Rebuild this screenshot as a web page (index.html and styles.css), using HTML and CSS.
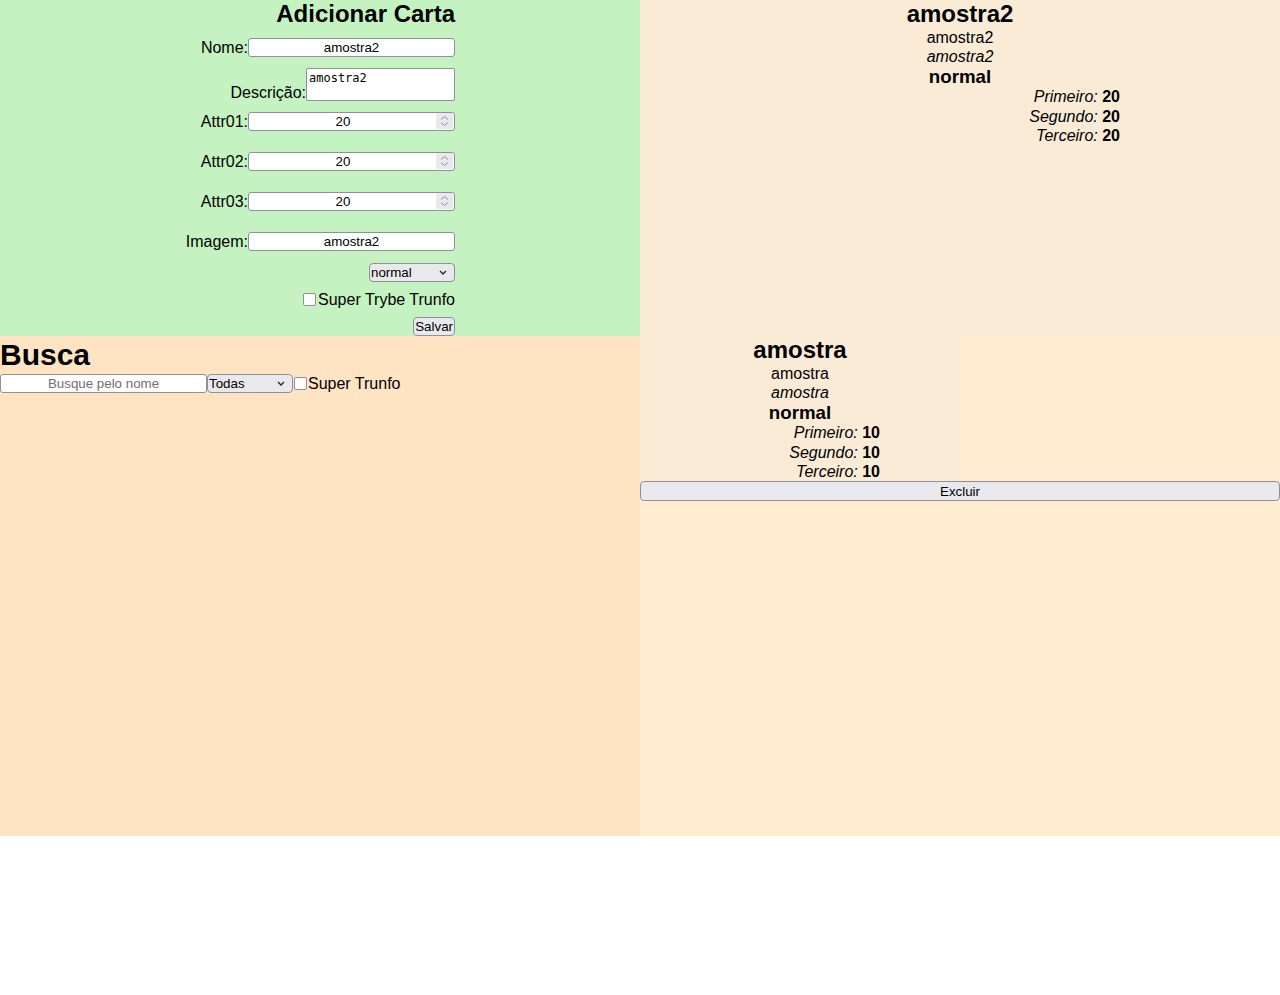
FILE: index.html
```html
<!DOCTYPE html>
<html lang="pt-BR">
<head>
<meta charset="utf-8">
<title>Tryunfo</title>
<link rel="stylesheet" href="styles.css">
</head>
<body>
<div class="app">
  <section class="creator">
    <form class="form">
      <h2 class="form-title">Adicionar Carta</h2>
      <label class="row">Nome:<input class="field" type="text" value="amostra2"></label>
      <label class="row row-end">Descrição:<textarea class="area">amostra2</textarea></label>
      <label class="row row-num">Attr01:<span class="num"><input class="field num-field" type="number" value="20"><span class="spin"><svg width="17" height="16" viewBox="0 0 17 16"><path d="M5 6.5 L8.5 3.5 L12 6.5" fill="none" stroke="#8f8f9d" stroke-width="1"/><path d="M5 9.5 L8.5 12.5 L12 9.5" fill="none" stroke="#8f8f9d" stroke-width="1"/></svg></span></span></label>
      <label class="row row-num">Attr02:<span class="num"><input class="field num-field" type="number" value="20"><span class="spin"><svg width="17" height="16" viewBox="0 0 17 16"><path d="M5 6.5 L8.5 3.5 L12 6.5" fill="none" stroke="#8f8f9d" stroke-width="1"/><path d="M5 9.5 L8.5 12.5 L12 9.5" fill="none" stroke="#8f8f9d" stroke-width="1"/></svg></span></span></label>
      <label class="row row-num">Attr03:<span class="num"><input class="field num-field" type="number" value="20"><span class="spin"><svg width="17" height="16" viewBox="0 0 17 16"><path d="M5 6.5 L8.5 3.5 L12 6.5" fill="none" stroke="#8f8f9d" stroke-width="1"/><path d="M5 9.5 L8.5 12.5 L12 9.5" fill="none" stroke="#8f8f9d" stroke-width="1"/></svg></span></span></label>
      <label class="row row-img">Imagem:<input class="field" type="text" value="amostra2"></label>
      <div class="row"><span class="sel sel-rare"><select class="pick"><option>normal</option><option>raro</option><option>muito raro</option></select><svg class="chev" width="8" height="5" viewBox="0 0 8 5"><path d="M1 1 L4 4 L7 1" fill="none" stroke="#222" stroke-width="1.3"/></svg></span></div>
      <label class="row row-check"><input class="check" type="checkbox">Super Trybe Trunfo</label>
      <div class="row"><button class="btn" type="button">Salvar</button></div>
    </form>
  </section>

  <section class="preview">
    <div class="card">
      <h2 class="card-name">amostra2</h2>
      <p class="card-line">amostra2</p>
      <p class="card-line card-desc">amostra2</p>
      <h3 class="card-rare">normal</h3>
      <div class="attrs">
        <p class="card-line"><em>Primeiro:</em> <strong>20</strong></p>
        <p class="card-line"><em>Segundo:</em> <strong>20</strong></p>
        <p class="card-line"><em>Terceiro:</em> <strong>20</strong></p>
      </div>
    </div>
  </section>

  <section class="search">
    <h1 class="search-title">Busca</h1>
    <div class="filters">
      <input class="field search-field" type="text" placeholder="Busque pelo nome">
      <span class="sel sel-all"><select class="pick"><option>Todas</option><option>normal</option><option>raro</option><option>muito raro</option></select><svg class="chev" width="8" height="5" viewBox="0 0 8 5"><path d="M1 1 L4 4 L7 1" fill="none" stroke="#222" stroke-width="1.3"/></svg></span>
      <label class="search-check"><input class="check" type="checkbox">Super Trunfo</label>
    </div>
  </section>

  <section class="list">
    <div class="card card-half">
      <h2 class="card-name">amostra</h2>
      <p class="card-line">amostra</p>
      <p class="card-line card-desc">amostra</p>
      <h3 class="card-rare">normal</h3>
      <div class="attrs">
        <p class="card-line"><em>Primeiro:</em> <strong>10</strong></p>
        <p class="card-line"><em>Segundo:</em> <strong>10</strong></p>
        <p class="card-line"><em>Terceiro:</em> <strong>10</strong></p>
      </div>
    </div>
    <button class="btn btn-wide" type="button">Excluir</button>
  </section>
</div>
</body>
</html>
```

FILE: styles.css
```css
* {
  box-sizing: border-box;
}

body {
  margin: 0;
  font-family: "Liberation Sans", Arial, sans-serif;
  font-size: 16px;
  color: #000;
  background: #fff;
}

.app {
  display: grid;
  grid-template-columns: 640px 640px;
  grid-template-rows: 336px 500px;
}

/* ---------- creator ---------- */
.creator {
  background: #c4f3c1;
}

.form {
  width: 455px;
  display: flex;
  flex-direction: column;
  align-items: flex-end;
  gap: 11px;
}

.form-title {
  margin: 0;
  font-size: 24px;
  line-height: 27px;
  font-weight: bold;
}

.row {
  display: flex;
  justify-content: flex-end;
  align-items: center;
  line-height: 18px;
}

.row-end {
  align-items: flex-end;
  line-height: 17px;
}

.row-num {
  margin-bottom: 10px;
}

.row-img {
  margin-bottom: 1px;
}

.row-check {
  height: 13px;
}

.field {
  width: 207px;
  height: 19px;
  margin: 0;
  padding: 0 2px;
  border: 1px solid #8f8f9d;
  border-radius: 3px;
  background: #fff;
  font-family: "Liberation Sans", Arial, sans-serif;
  font-size: 13.33px;
  color: #000;
  text-align: center;
}

.field::placeholder {
  color: #707070;
}

.num {
  position: relative;
  display: block;
  width: 207px;
  height: 19px;
}

.num-field {
  display: block;
  padding-right: 19px;
  -moz-appearance: textfield;
}

.num-field::-webkit-inner-spin-button,
.num-field::-webkit-outer-spin-button {
  -webkit-appearance: none;
  margin: 0;
}

.spin {
  position: absolute;
  right: 2px;
  top: 1px;
  width: 17px;
  height: 16px;
  background: #e9e9ed;
  border-radius: 2px;
  display: flex;
  pointer-events: none;
}

.area {
  width: 149px;
  height: 33px;
  margin: 0;
  padding: 2px 2px;
  border: 1px solid #8f8f9d;
  border-radius: 2px;
  background: #fff;
  font-family: "DejaVu Sans Mono", "Liberation Mono", monospace;
  font-size: 12px;
  line-height: 14px;
  resize: none;
  overflow: hidden;
}

.sel {
  position: relative;
  display: block;
  height: 19px;
}

.sel-rare {
  width: 86px;
}

.pick {
  -webkit-appearance: none;
  appearance: none;
  display: block;
  width: 100%;
  height: 19px;
  margin: 0;
  padding: 0 1px;
  border: 1px solid #8f8f9d;
  border-radius: 4px;
  background: #e9e9ed;
  font-family: "Liberation Sans", Arial, sans-serif;
  font-size: 13.33px;
  color: #000;
}

.chev {
  position: absolute;
  right: 8px;
  top: 7px;
  pointer-events: none;
}

.check {
  -webkit-appearance: none;
  appearance: none;
  width: 13px;
  height: 13px;
  margin: 0 1px 0 0;
  border: 1px solid #8f8f9d;
  border-radius: 2px;
  background: #fff;
  flex: none;
}

.row-check .check {
  margin-right: 2px;
}

.btn {
  height: 19px;
  margin: 0;
  padding: 0 1px;
  border: 1px solid #8f8f9d;
  border-radius: 4px;
  background: #e9e9ed;
  font-family: "Liberation Sans", Arial, sans-serif;
  font-size: 13.33px;
  color: #000;
}

/* ---------- cards ---------- */
.preview {
  background: #faebd7;
}

.card {
  background: #faebd7;
  text-align: center;
}

.card-name {
  margin: 0;
  font-size: 24px;
  line-height: 28px;
  font-weight: bold;
}

.card-line {
  margin: 0;
  font-size: 16px;
  line-height: 19.2px;
}

.card-desc {
  font-style: italic;
}

.card-rare {
  margin: 0;
  font-size: 18.72px;
  line-height: 21px;
  font-weight: bold;
}

.attrs {
  width: 75%;
  text-align: right;
}

/* ---------- search ---------- */
.search {
  background: #ffe4c4;
}

.search-title {
  margin: 0;
  font-size: 30px;
  line-height: 38px;
  font-weight: bold;
}

.filters {
  display: flex;
  align-items: center;
}

.search-field {
  flex: none;
}

.sel-all {
  width: 86px;
}

.search-check {
  display: flex;
  align-items: center;
  line-height: 18px;
  margin-left: 1px;
}

/* ---------- list ---------- */
.list {
  background: #ffebcd;
  display: flex;
  flex-wrap: wrap;
  align-content: flex-start;
}

.card-half {
  width: 50%;
}

.btn-wide {
  width: 100%;
  height: 20px;
}
```
